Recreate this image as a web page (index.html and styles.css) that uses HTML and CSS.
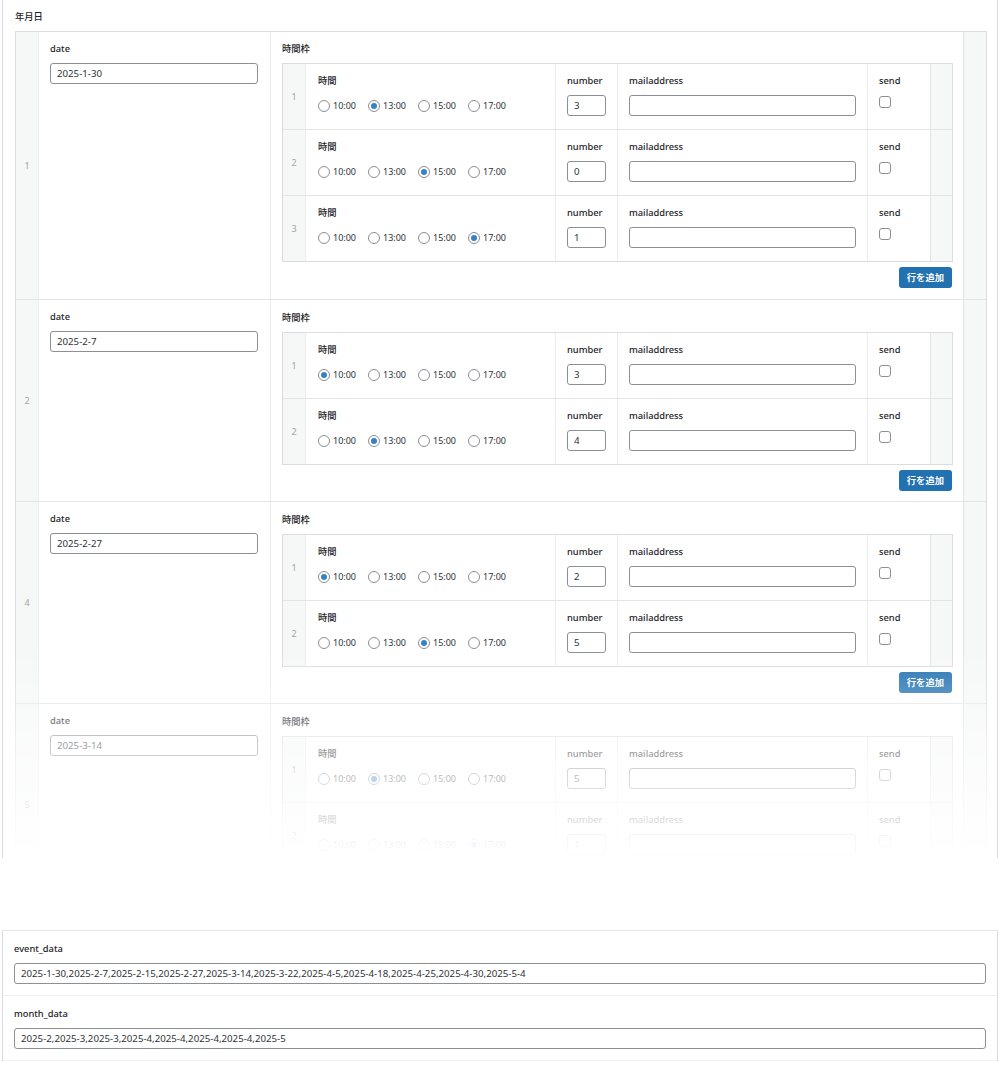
FILE: index.html
```html
<!DOCTYPE html>
<html lang="ja">
<head>
<meta charset="utf-8">
<title>年月日</title>
<link rel="stylesheet" href="styles.css">
</head>
<body>
<div class="panel panel-top">
  <div class="label field-label">年月日</div>
  <div class="repeater">

    <div class="row">
      <div class="handle">1</div>
      <div class="cell date-cell">
        <div class="label">date</div>
        <input class="text" type="text" value="2025-1-30">
      </div>
      <div class="cell slots-cell">
        <div class="label">時間枠</div>
        <div class="inner">
          <div class="irow">
            <div class="handle">1</div>
            <div class="icell time">
              <div class="label">時間</div>
              <div class="radios">
                <span class="opt"><span class="radio"></span>10:00</span>
                <span class="opt"><span class="radio on"></span>13:00</span>
                <span class="opt"><span class="radio"></span>15:00</span>
                <span class="opt"><span class="radio"></span>17:00</span>
              </div>
            </div>
            <div class="icell num"><div class="label">number</div><input class="text" type="text" value="3"></div>
            <div class="icell mail"><div class="label">mailaddress</div><input class="text" type="text" value=""></div>
            <div class="icell send"><div class="label">send</div><span class="check"></span></div>
            <div class="handle"></div>
          </div>
          <div class="irow">
            <div class="handle">2</div>
            <div class="icell time">
              <div class="label">時間</div>
              <div class="radios">
                <span class="opt"><span class="radio"></span>10:00</span>
                <span class="opt"><span class="radio"></span>13:00</span>
                <span class="opt"><span class="radio on"></span>15:00</span>
                <span class="opt"><span class="radio"></span>17:00</span>
              </div>
            </div>
            <div class="icell num"><div class="label">number</div><input class="text" type="text" value="0"></div>
            <div class="icell mail"><div class="label">mailaddress</div><input class="text" type="text" value=""></div>
            <div class="icell send"><div class="label">send</div><span class="check"></span></div>
            <div class="handle"></div>
          </div>
          <div class="irow">
            <div class="handle">3</div>
            <div class="icell time">
              <div class="label">時間</div>
              <div class="radios">
                <span class="opt"><span class="radio"></span>10:00</span>
                <span class="opt"><span class="radio"></span>13:00</span>
                <span class="opt"><span class="radio"></span>15:00</span>
                <span class="opt"><span class="radio on"></span>17:00</span>
              </div>
            </div>
            <div class="icell num"><div class="label">number</div><input class="text" type="text" value="1"></div>
            <div class="icell mail"><div class="label">mailaddress</div><input class="text" type="text" value=""></div>
            <div class="icell send"><div class="label">send</div><span class="check"></span></div>
            <div class="handle"></div>
          </div>
        </div>
        <div class="actions"><span class="btn">行を追加</span></div>
      </div>
      <div class="handle"></div>
    </div>

    <div class="row">
      <div class="handle">2</div>
      <div class="cell date-cell">
        <div class="label">date</div>
        <input class="text" type="text" value="2025-2-7">
      </div>
      <div class="cell slots-cell">
        <div class="label">時間枠</div>
        <div class="inner">
          <div class="irow">
            <div class="handle">1</div>
            <div class="icell time">
              <div class="label">時間</div>
              <div class="radios">
                <span class="opt"><span class="radio on"></span>10:00</span>
                <span class="opt"><span class="radio"></span>13:00</span>
                <span class="opt"><span class="radio"></span>15:00</span>
                <span class="opt"><span class="radio"></span>17:00</span>
              </div>
            </div>
            <div class="icell num"><div class="label">number</div><input class="text" type="text" value="3"></div>
            <div class="icell mail"><div class="label">mailaddress</div><input class="text" type="text" value=""></div>
            <div class="icell send"><div class="label">send</div><span class="check"></span></div>
            <div class="handle"></div>
          </div>
          <div class="irow">
            <div class="handle">2</div>
            <div class="icell time">
              <div class="label">時間</div>
              <div class="radios">
                <span class="opt"><span class="radio"></span>10:00</span>
                <span class="opt"><span class="radio on"></span>13:00</span>
                <span class="opt"><span class="radio"></span>15:00</span>
                <span class="opt"><span class="radio"></span>17:00</span>
              </div>
            </div>
            <div class="icell num"><div class="label">number</div><input class="text" type="text" value="4"></div>
            <div class="icell mail"><div class="label">mailaddress</div><input class="text" type="text" value=""></div>
            <div class="icell send"><div class="label">send</div><span class="check"></span></div>
            <div class="handle"></div>
          </div>
        </div>
        <div class="actions"><span class="btn">行を追加</span></div>
      </div>
      <div class="handle"></div>
    </div>

    <div class="row">
      <div class="handle">4</div>
      <div class="cell date-cell">
        <div class="label">date</div>
        <input class="text" type="text" value="2025-2-27">
      </div>
      <div class="cell slots-cell">
        <div class="label">時間枠</div>
        <div class="inner">
          <div class="irow">
            <div class="handle">1</div>
            <div class="icell time">
              <div class="label">時間</div>
              <div class="radios">
                <span class="opt"><span class="radio on"></span>10:00</span>
                <span class="opt"><span class="radio"></span>13:00</span>
                <span class="opt"><span class="radio"></span>15:00</span>
                <span class="opt"><span class="radio"></span>17:00</span>
              </div>
            </div>
            <div class="icell num"><div class="label">number</div><input class="text" type="text" value="2"></div>
            <div class="icell mail"><div class="label">mailaddress</div><input class="text" type="text" value=""></div>
            <div class="icell send"><div class="label">send</div><span class="check"></span></div>
            <div class="handle"></div>
          </div>
          <div class="irow">
            <div class="handle">2</div>
            <div class="icell time">
              <div class="label">時間</div>
              <div class="radios">
                <span class="opt"><span class="radio"></span>10:00</span>
                <span class="opt"><span class="radio"></span>13:00</span>
                <span class="opt"><span class="radio on"></span>15:00</span>
                <span class="opt"><span class="radio"></span>17:00</span>
              </div>
            </div>
            <div class="icell num"><div class="label">number</div><input class="text" type="text" value="5"></div>
            <div class="icell mail"><div class="label">mailaddress</div><input class="text" type="text" value=""></div>
            <div class="icell send"><div class="label">send</div><span class="check"></span></div>
            <div class="handle"></div>
          </div>
        </div>
        <div class="actions"><span class="btn">行を追加</span></div>
      </div>
      <div class="handle"></div>
    </div>

    <div class="row">
      <div class="handle">5</div>
      <div class="cell date-cell">
        <div class="label">date</div>
        <input class="text" type="text" value="2025-3-14">
      </div>
      <div class="cell slots-cell">
        <div class="label">時間枠</div>
        <div class="inner">
          <div class="irow">
            <div class="handle">1</div>
            <div class="icell time">
              <div class="label">時間</div>
              <div class="radios">
                <span class="opt"><span class="radio"></span>10:00</span>
                <span class="opt"><span class="radio on"></span>13:00</span>
                <span class="opt"><span class="radio"></span>15:00</span>
                <span class="opt"><span class="radio"></span>17:00</span>
              </div>
            </div>
            <div class="icell num"><div class="label">number</div><input class="text" type="text" value="5"></div>
            <div class="icell mail"><div class="label">mailaddress</div><input class="text" type="text" value=""></div>
            <div class="icell send"><div class="label">send</div><span class="check"></span></div>
            <div class="handle"></div>
          </div>
          <div class="irow">
            <div class="handle">2</div>
            <div class="icell time">
              <div class="label">時間</div>
              <div class="radios">
                <span class="opt"><span class="radio"></span>10:00</span>
                <span class="opt"><span class="radio"></span>13:00</span>
                <span class="opt"><span class="radio"></span>15:00</span>
                <span class="opt"><span class="radio on"></span>17:00</span>
              </div>
            </div>
            <div class="icell num"><div class="label">number</div><input class="text" type="text" value="1"></div>
            <div class="icell mail"><div class="label">mailaddress</div><input class="text" type="text" value=""></div>
            <div class="icell send"><div class="label">send</div><span class="check"></span></div>
            <div class="handle"></div>
          </div>
        </div>
        <div class="actions"><span class="btn">行を追加</span></div>
      </div>
      <div class="handle"></div>
    </div>

  </div>
  <div class="fade"></div>
</div>

<div class="panel panel-bottom">
  <div class="field">
    <div class="label field-label">event_data</div>
    <input class="text" type="text" value="2025-1-30,2025-2-7,2025-2-15,2025-2-27,2025-3-14,2025-3-22,2025-4-5,2025-4-18,2025-4-25,2025-4-30,2025-5-4">
  </div>
  <div class="field">
    <div class="label field-label">month_data</div>
    <input class="text" type="text" value="2025-2,2025-3,2025-3,2025-4,2025-4,2025-4,2025-4,2025-5">
  </div>
</div>
</body>
</html>
```

FILE: styles.css
```css
* {
  box-sizing: border-box;
}

body {
  margin: 0;
  background: #fff;
  font-family: "Noto Sans", "Noto Sans CJK JP", sans-serif;
  color: #1d2327;
}

.panel {
  margin-left: 2px;
  width: 996px;
  border-left: 1px solid #dcdcde;
  border-right: 1px solid #dcdcde;
}

.panel-top {
  position: relative;
  height: 858px;
  overflow: hidden;
  padding: 10px 9px 0 12px;
}

.fade {
  position: absolute;
  left: 0;
  right: 0;
  bottom: 0;
  height: 210px;
  background: linear-gradient(rgba(255, 255, 255, 0), rgba(255, 255, 255, 0.5) 45%, #fff 100%);
}

.label {
  height: 14px;
  line-height: 14px;
  font-size: 9.3px;
  font-weight: 500;
  color: #1d2327;
  white-space: nowrap;
}

.field-label {
  margin-bottom: 7px;
}

.text {
  display: block;
  width: 100%;
  height: 21px;
  margin: 0;
  padding: 0 6px;
  border: 1px solid #8c8f94;
  border-radius: 3px;
  background: #fff;
  font-family: "Noto Sans", sans-serif;
  font-size: 9.7px;
  color: #2c3338;
  outline: none;
}

/* outer repeater */
.repeater {
  width: 972px;
  border: 1px solid #dcdcde;
}

.row {
  display: grid;
  grid-template-columns: 22px 232px 1fr 23px;
}

.row + .row {
  border-top: 1px solid #e4e4e4;
}

.handle {
  display: flex;
  align-items: center;
  justify-content: center;
  background: #f6f7f7;
  color: #a0a5aa;
  font-size: 9px;
}

.row > .handle:last-child,
.irow > .handle:last-child {
  border-left: 1px solid #e4e4e4;
}

.cell {
  border-left: 1px solid #ececec;
  padding: 10px 12px 11px 11px;
}

.row + .row .cell {
  padding-top: 11px;
  padding-bottom: 10px;
}

.row + .row .date-cell {
  padding-top: 10px;
}

.cell > .label {
  margin-bottom: 7px;
}

.slots-cell {
  padding-right: 10px;
}

/* inner table */
.inner {
  border: 1px solid #dcdcde;
}

.irow {
  display: grid;
  grid-template-columns: 22px 250px 62px 250px 63px 1fr;
}

.irow + .irow {
  border-top: 1px solid #e4e4e4;
}

.icell {
  height: 65px;
  border-left: 1px solid #ececec;
  padding: 10px 11px 0 11px;
}

.icell > .label {
  margin-bottom: 7px;
}

.time {
  padding-left: 12px;
}

.num .text {
  width: 39px;
}

.radios {
  display: flex;
  align-items: center;
  height: 21px;
}

.opt {
  display: flex;
  align-items: center;
  gap: 3px;
  width: 50px;
  font-size: 9px;
  color: #2c3338;
}

.radio {
  position: relative;
  flex: none;
  width: 12px;
  height: 12px;
  border: 1px solid #8c8f94;
  border-radius: 50%;
  background: #fff;
}

.radio.on::after {
  content: "";
  position: absolute;
  left: 2px;
  top: 2px;
  width: 6px;
  height: 6px;
  border-radius: 50%;
  background: #3582c4;
}

.check {
  display: block;
  width: 12px;
  height: 12px;
  margin-top: 8px;
  border: 1px solid #8c8f94;
  border-radius: 3px;
  background: #fff;
}

.actions {
  margin-top: 5px;
  display: flex;
  justify-content: flex-end;
  padding-right: 1px;
}

.btn {
  display: inline-block;
  height: 21px;
  line-height: 21px;
  padding: 0 8px;
  border-radius: 3px;
  background: #2271b1;
  color: #fff;
  font-size: 9.3px;
  font-weight: 600;
}

/* bottom panel */
.panel-bottom {
  margin-top: 72px;
  border-top: 1px solid #e6e6e6;
}

.field {
  padding: 11px 11px 11px 11px;
  border-bottom: 1px solid #f0f0f1;
}
```
